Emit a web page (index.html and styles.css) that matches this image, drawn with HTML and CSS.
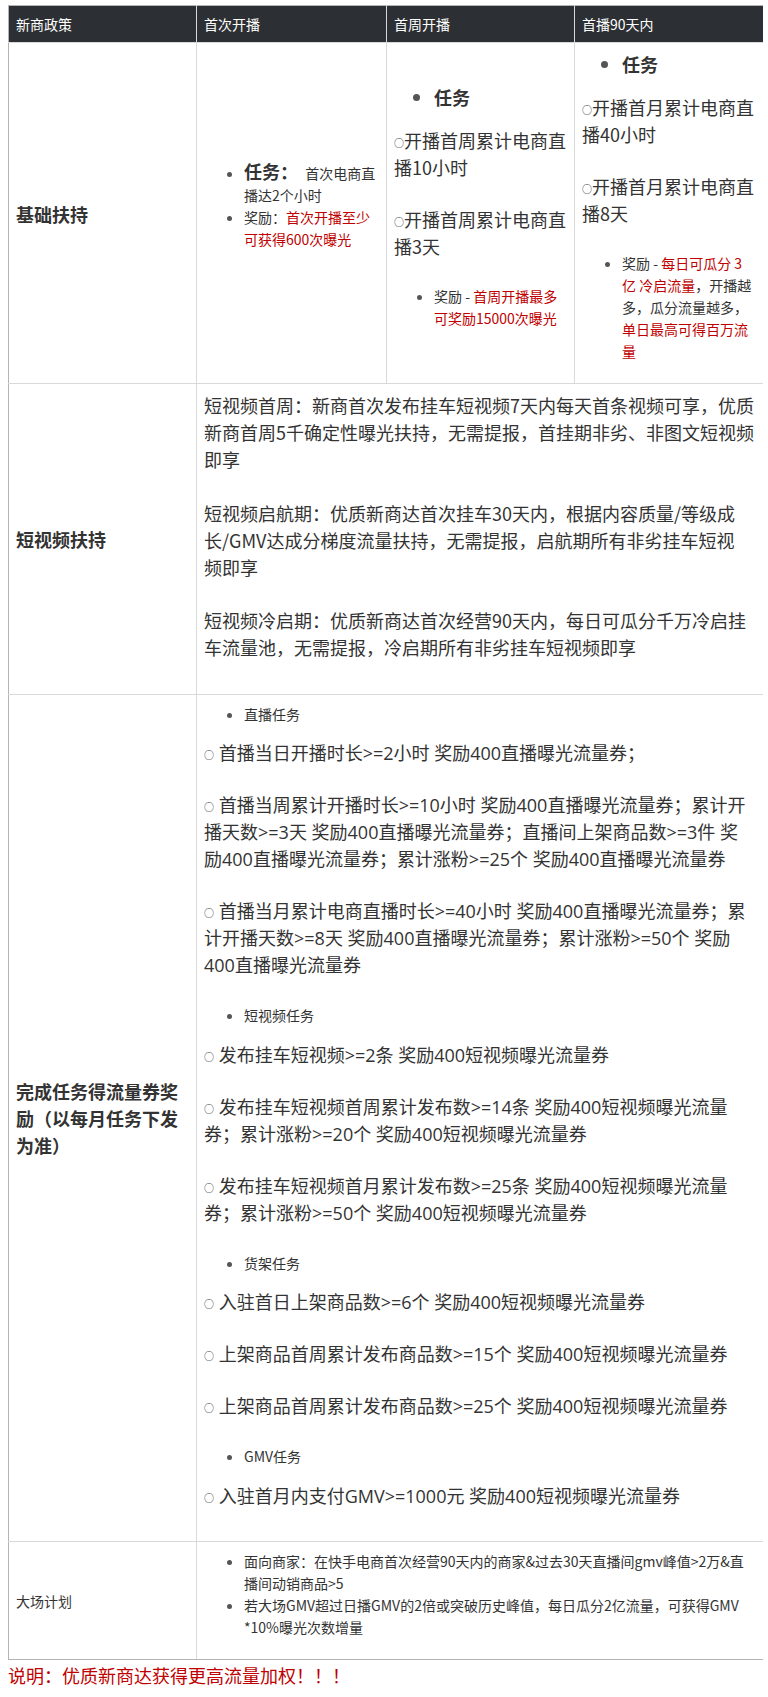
FILE: index.html
```html
<!DOCTYPE html>
<html lang="zh-CN">
<head>
<meta charset="utf-8">
<title>新商政策</title>
<link rel="stylesheet" href="styles.css">
</head>
<body>
<table class="policy">
  <colgroup>
    <col class="c1"><col class="c2"><col class="c3"><col class="c4">
  </colgroup>
  <thead>
    <tr><th>新商政策</th><th>首次开播</th><th>首周开播</th><th>首播90天内</th></tr>
  </thead>
  <tbody>
    <tr>
      <td class="label">基础扶持</td>
      <td>
        <ul class="list">
          <li><strong class="task">任务：</strong> 首次电商直播达2个小时</li>
          <li>奖励：<span class="red">首次开播至少可获得600次曝光</span></li>
        </ul>
      </td>
      <td>
        <ul class="list big"><li><strong>任务</strong></li></ul>
        <p class="item"><span class="c">○</span>开播首周累计电商直播10小时</p>
        <p class="item"><span class="c">○</span>开播首周累计电商直播3天</p>
        <ul class="list"><li>奖励 - <span class="red">首周开播最多可奖励15000次曝光</span></li></ul>
      </td>
      <td>
        <ul class="list big"><li><strong>任务</strong></li></ul>
        <p class="item"><span class="c">○</span>开播首月累计电商直播40小时</p>
        <p class="item"><span class="c">○</span>开播首月累计电商直播8天</p>
        <ul class="list"><li>奖励 - <span class="red">每日可瓜分 3 亿 冷启流量</span>，开播越多，瓜分流量越多，<span class="red">单日最高可得百万流量</span></li></ul>
      </td>
    </tr>
    <tr>
      <td class="label">短视频扶持</td>
      <td colspan="3">
        <p class="item para">短视频首周：新商首次发布挂车短视频7天内每天首条视频可享，优质新商首周5千确定性曝光扶持，无需提报，首挂期非劣、非图文短视频即享</p>
        <p class="item para">短视频启航期：优质新商达首次挂车30天内，根据内容质量/等级成<br>长/GMV达成分梯度流量扶持，无需提报，启航期所有非劣挂车短视<br>频即享</p>
        <p class="item para">短视频冷启期：优质新商达首次经营90天内，每日可瓜分千万冷启挂车流量池，无需提报，冷启期所有非劣挂车短视频即享</p>
      </td>
    </tr>
    <tr>
      <td class="label">完成任务得流量券奖励（以每月任务下发为准）</td>
      <td colspan="3" class="tasks">
        <ul class="list"><li>直播任务</li></ul>
        <p class="item"><span class="c">○</span> 首播当日开播时长&gt;=2小时 奖励400直播曝光流量券；</p>
        <p class="item"><span class="c">○</span> 首播当周累计开播时长&gt;=10小时 奖励400直播曝光流量券；累计开<br>播天数&gt;=3天 奖励400直播曝光流量券；直播间上架商品数&gt;=3件 奖<br>励400直播曝光流量券；累计涨粉&gt;=25个 奖励400直播曝光流量券</p>
        <p class="item"><span class="c">○</span> 首播当月累计电商直播时长&gt;=40小时 奖励400直播曝光流量券；累<br>计开播天数&gt;=8天 奖励400直播曝光流量券；累计涨粉&gt;=50个 奖励<br>400直播曝光流量券</p>
        <ul class="list"><li>短视频任务</li></ul>
        <p class="item"><span class="c">○</span> 发布挂车短视频&gt;=2条 奖励400短视频曝光流量券</p>
        <p class="item"><span class="c">○</span> 发布挂车短视频首周累计发布数&gt;=14条 奖励400短视频曝光流量<br>券；累计涨粉&gt;=20个 奖励400短视频曝光流量券</p>
        <p class="item"><span class="c">○</span> 发布挂车短视频首月累计发布数&gt;=25条 奖励400短视频曝光流量<br>券；累计涨粉&gt;=50个 奖励400短视频曝光流量券</p>
        <ul class="list"><li>货架任务</li></ul>
        <p class="item"><span class="c">○</span> 入驻首日上架商品数&gt;=6个 奖励400短视频曝光流量券</p>
        <p class="item"><span class="c">○</span> 上架商品首周累计发布商品数&gt;=15个 奖励400短视频曝光流量券</p>
        <p class="item"><span class="c">○</span> 上架商品首周累计发布商品数&gt;=25个 奖励400短视频曝光流量券</p>
        <ul class="list"><li>GMV任务</li></ul>
        <p class="item"><span class="c">○</span> 入驻首月内支付GMV&gt;=1000元 奖励400短视频曝光流量券</p>
      </td>
    </tr>
    <tr>
      <td class="label plain">大场计划</td>
      <td colspan="3">
        <ul class="list">
          <li>面向商家：在快手电商首次经营90天内的商家&amp;过去30天直播间gmv峰值&gt;2万&amp;直<br>播间动销商品&gt;5</li>
          <li>若大场GMV超过日播GMV的2倍或突破历史峰值，每日瓜分2亿流量，可获得GMV<br>*10%曝光次数增量</li>
        </ul>
      </td>
    </tr>
  </tbody>
</table>
<p class="note">说明：优质新商达获得更高流量加权！！！</p>
</body>
</html>
```

FILE: styles.css
```css
html, body {
  background: #ffffff;
}
body {
  margin: 5px 5px 0 8px;
  font-family: "Noto Sans CJK SC", "Noto Sans", sans-serif;
  color: #333333;
}
.policy {
  border-collapse: collapse;
  table-layout: fixed;
  width: 756px;
}
.c1 { width: 188px; }
.c2 { width: 190px; }
.c3 { width: 188px; }
.c4 { width: 190px; }

.policy th,
.policy td {
  border: 1px solid #d9d9d9;
  padding: 8px 7px 6px;
  vertical-align: middle;
  text-align: left;
}
.policy th {
  background: #2c2f33;
  color: #ffffff;
  font-weight: normal;
  font-size: 14px;
  line-height: 22px;
  padding: 7px 7px;
  border-top-color: #b4b4b4;
}
.policy tr > :first-child { border-left-color: #b4b4b4; }
.policy tr > :last-child { border-right-color: #b4b4b4; }
.policy tbody tr:last-child td { border-bottom-color: #b4b4b4; }

.label {
  font-size: 18px;
  font-weight: bold;
  line-height: 27px;
}
.label.plain {
  font-size: 14px;
  font-weight: normal;
  line-height: 22px;
}
.list {
  margin: 0 0 15.5px;
  padding-left: 40px;
  font-size: 14px;
  line-height: 22px;
}
.list li::marker { color: #555555; }
.list.big {
  font-size: 18px;
  line-height: 27px;
}
.task {
  font-size: 18px;
  line-height: 0;
  margin-right: 4px;
}
.item {
  margin: 0 0 25px;
  font-size: 18px;
  line-height: 27px;
}
.item.para { margin-bottom: 26.5px; }
.tasks .item {
  font-family: "Open Sans", "Noto Sans CJK SC", sans-serif;
}
.c {
  font-family: "Noto Sans CJK SC", sans-serif;
  font-size: 10px;
  line-height: 0;
  vertical-align: 1px;
}
.red { color: #c00000; }
.note {
  margin: 0;
  color: #c00000;
  font-size: 18px;
  line-height: 30px;
}
```
